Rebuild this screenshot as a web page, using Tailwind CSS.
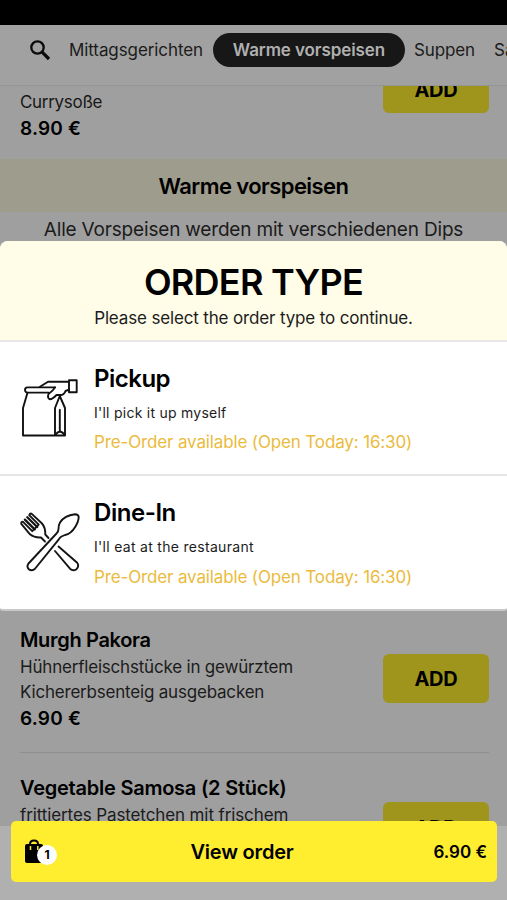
<!DOCTYPE html>
<html lang="de">
<head>
<meta charset="utf-8">
<title>Order type</title>
<script src="https://cdn.jsdelivr.net/npm/@tailwindcss/browser@4"></script>
</head>
<body class="bg-black">
<div class="relative w-[507px] h-[900px] overflow-hidden bg-[#9f9f9f] text-black font-['Inter','Liberation_Sans',sans-serif] whitespace-nowrap flex flex-col">
  <div class="h-[25px] bg-black shrink-0"></div>
  <header class="h-[61px] shrink-0 border-b border-[#959595] bg-[#a1a1a1] flex items-start pl-[29px] pt-2 text-[17px] text-[#1b1b1b] overflow-hidden">
    <svg class="mt-[6px] w-[22px] h-[22px] shrink-0" viewBox="0 0 22 22" fill="none" stroke="#0b0b0b"><circle cx="8.5" cy="8.5" r="6.2" stroke-width="2.3"/><path d="M13.2 13.2L20 20" stroke-width="3.2"/></svg>
    <span class="ml-[18px] w-[144px] shrink-0 leading-[34px] tracking-[-0.09px]">Mittagsgerichten</span>
    <span class="w-[192px] h-[34px] shrink-0 rounded-full bg-[#171717] text-[#b0b0b0] font-semibold text-center leading-[34px] tracking-[-0.09px]">Warme vorspeisen</span>
    <span class="ml-[9px] w-[80px] shrink-0 leading-[34px] tracking-[-0.15px]">Suppen</span>
    <span class="shrink-0 leading-[34px]">Salate</span>
  </header>
  <section class="h-[73px] shrink-0 flex justify-between pl-5 pr-[18px] overflow-hidden">
    <div class="pt-[3px]">
      <p class="text-[17px] leading-[26px] tracking-[-0.3px] text-[#181818]">Currysoße</p>
      <p class="mt-px text-[19px] leading-[26px] font-semibold tracking-[0.2px]">8.90 €</p>
    </div>
    <div class="w-[106px] h-[49px] -mt-[22px] pt-[2px] rounded-md bg-[#a0951c] flex items-center justify-center text-[20px] font-bold tracking-[-0.2px]">ADD</div>
  </section>
  <h2 class="h-[53px] shrink-0 bg-[#9e9d8d] text-center text-[22px] leading-[54px] font-semibold tracking-[-0.57px]">Warme vorspeisen</h2>
  <p class="h-[398px] shrink-0 text-center text-[19px] leading-[35px] tracking-[-0.18px] text-[#1b1b1b]">Alle Vorspeisen werden mit verschiedenen Dips</p>
  <section class="h-[143px] ml-5 mr-[18px] shrink-0 border-b border-[#8e8e8e] flex justify-between">
    <div class="pt-[17px]">
      <h3 class="text-[20px] leading-[26px] font-semibold tracking-[-0.33px]">Murgh Pakora</h3>
      <p class="mt-[2px] text-[17px] leading-[25px] tracking-[-0.2px] text-[#1b1b1b]">Hühnerfleischstücke in gewürztem<br>Kichererbsenteig ausgebacken</p>
      <p class="mt-px text-[19px] leading-[26px] font-semibold tracking-[0.2px]">6.90 €</p>
    </div>
    <div class="mt-[44px] pt-px w-[106px] h-[49px] rounded-md bg-[#a0951c] flex items-center justify-center text-[20px] font-bold tracking-[-0.2px]">ADD</div>
  </section>
  <section class="ml-5 mr-[18px] h-[147px] shrink-0 flex justify-between">
    <div class="pt-[22px]">
      <h3 class="text-[20px] leading-[26px] font-semibold tracking-[-0.24px]">Vegetable Samosa (2 Stück)</h3>
      <p class="mt-[2px] text-[17px] leading-[25px] tracking-[-0.11px] text-[#1b1b1b]">frittiertes Pastetchen mit frischem</p>
    </div>
    <div class="mt-[49px] pt-[3px] w-[106px] h-[49px] rounded-md bg-[#a0951c] flex items-center justify-center text-[20px] font-bold tracking-[-0.2px]">ADD</div>
  </section>

  <div class="absolute left-0 top-[241px] w-[507px] h-[370px] rounded-t-[8px] rounded-b-[3px] overflow-hidden bg-white border-b-2 border-[#c9c9c9]">
    <div class="h-[101px] bg-[#fffde8] border-b-2 border-[#e8e6e8] flex flex-col items-center pt-[19px]">
      <h1 class="text-[36px] leading-[44px] font-semibold tracking-[-0.72px]">ORDER TYPE</h1>
      <p class="mt-[2px] text-[17px] leading-[25px] tracking-[-0.15px] text-[#1c1c1c]">Please select the order type to continue.</p>
    </div>
    <div class="h-[134px] border-b-2 border-[#e5e5e5] flex">
      <svg class="ml-[10px] mt-[23px] w-20 h-20 shrink-0" viewBox="0 0 80 80" fill="none" stroke="#111" stroke-width="1.9" stroke-linejoin="round" stroke-linecap="round">
        <path d="M45 22.400H17.500Q15 22.600 15 25Q15.200 27.600 17.500 27.600H38.500"/>
        <path d="M17.500 27.800L13 43V70.500H55V43L49.800 31L45 43V70.500"/>
        <path d="M49.800 45V66.500M45.500 70Q47 67 49.800 66.500Q53 67 54.500 70"/>
        <path d="M30 21.800L38 16.800H58.500M45 22.400Q43 26 38.500 29Q37 33.500 40 34.200Q42.500 34.200 46.500 30L49.500 30Q54 30.500 55.500 26L59 24.600"/>
        <path d="M59 15.200H66.700V27.300H59Z"/>
      </svg>
      <div class="ml-1 pt-[21px]">
        <h2 class="text-[24px] leading-[32px] font-semibold tracking-[-0.5px]">Pickup</h2>
        <p class="mt-[4px] text-[14px] leading-[28px] tracking-[0.25px] text-[#1c1c1c]">I'll pick it up myself</p>
        <p class="mt-[1px] text-[17px] leading-[28px] tracking-[-0.14px] text-[#eabb3d]">Pre-Order available (Open Today: 16:30)</p>
      </div>
    </div>
    <div class="h-[133px] flex">
      <svg class="ml-[10px] mt-[24px] w-20 h-20 shrink-0" viewBox="0 0 80 80" fill="none" stroke="#151515" stroke-width="1.9" stroke-linejoin="round" stroke-linecap="round">
        <path d="M38.500 38L35.300 34.500Q35.500 27.500 32 23.500L21.500 13.600Q19.800 13.300 19.200 15.200L28.700 24.700L22.300 31.200L12.800 21.700Q10.800 21.800 11.300 23.800L20 34.300Q24 37.800 31 37.500L35 41.500"/>
        <path d="M17.300 17.200L27.200 27M14.900 19.600L24.700 29.400" stroke-width="2.300"/>
        <path d="M25.300 68.800L49.500 38.500Q51 36 54.500 35.500Q60.500 34 64.500 27.500Q68.700 21 68.700 17Q68.300 14.300 65 14.300Q54.500 15.500 50 22.500Q48.500 25 48.500 29Q48.500 31.500 46.500 33.800L18.800 62.500" stroke="none"/>
        <path d="M24.800 69Q21.500 71.500 18.800 69.300Q16.300 66.500 18.500 63.500L46.500 33.500Q48.500 31.500 48.500 29Q48.500 25 50 22.500Q54.500 15.500 65 14.300Q68.400 14.300 68.700 17Q68.700 21 65.500 26.500Q61 34 55 35L51.500 36.500Q50 37.500 48.800 39.300Z"/>
        <path d="M45 51L60 68.700Q63 71.500 66.500 69.200Q69.500 66 67.200 62.800L48.500 46.500"/>
      </svg>
      <div class="ml-1 pt-[21px]">
        <h2 class="text-[24px] leading-[32px] font-semibold tracking-[-0.45px]">Dine-In</h2>
        <p class="mt-[4px] text-[14px] leading-[28px] tracking-[0.3px] text-[#1c1c1c]">I'll eat at the restaurant</p>
        <p class="mt-[2px] text-[17px] leading-[28px] tracking-[-0.14px] text-[#eabb3d]">Pre-Order available (Open Today: 16:30)</p>
      </div>
    </div>
  </div>

  <div class="absolute left-0 bottom-0 w-[507px] h-[74px] bg-[#b0b0b0]"></div>
  <div class="absolute left-[11px] top-[821px] w-[486px] h-[61px] rounded-[5px] bg-[#ffed2f] grid grid-cols-[76px_1fr_100px] items-center">
    <svg class="ml-[13px] w-9 h-[30px]" viewBox="0 0 36 30"><path d="M1 9Q1 7 3 7H17Q19 7 19 9V26H3Q1 26 1 24Z" fill="#000"/><path d="M6 12V7Q6 3.500 10 3.500Q14 3.500 14 7V12" fill="none" stroke="#000" stroke-width="2"/><path d="M6.500 9V13M13.800 9V13" stroke="#ffed2f" stroke-width="1.500"/><circle cx="23" cy="18" r="10" fill="#fff"/><text x="23" y="22.300" text-anchor="middle" font-family="Inter" font-weight="700" font-size="12">1</text></svg>
    <span class="text-center text-[20px] font-semibold tracking-[-0.2px]">View order</span>
    <span class="text-right pt-[2px] pr-[10px] text-[17px] font-semibold">6.90 €</span>
  </div>
</div>
</body>
</html>
